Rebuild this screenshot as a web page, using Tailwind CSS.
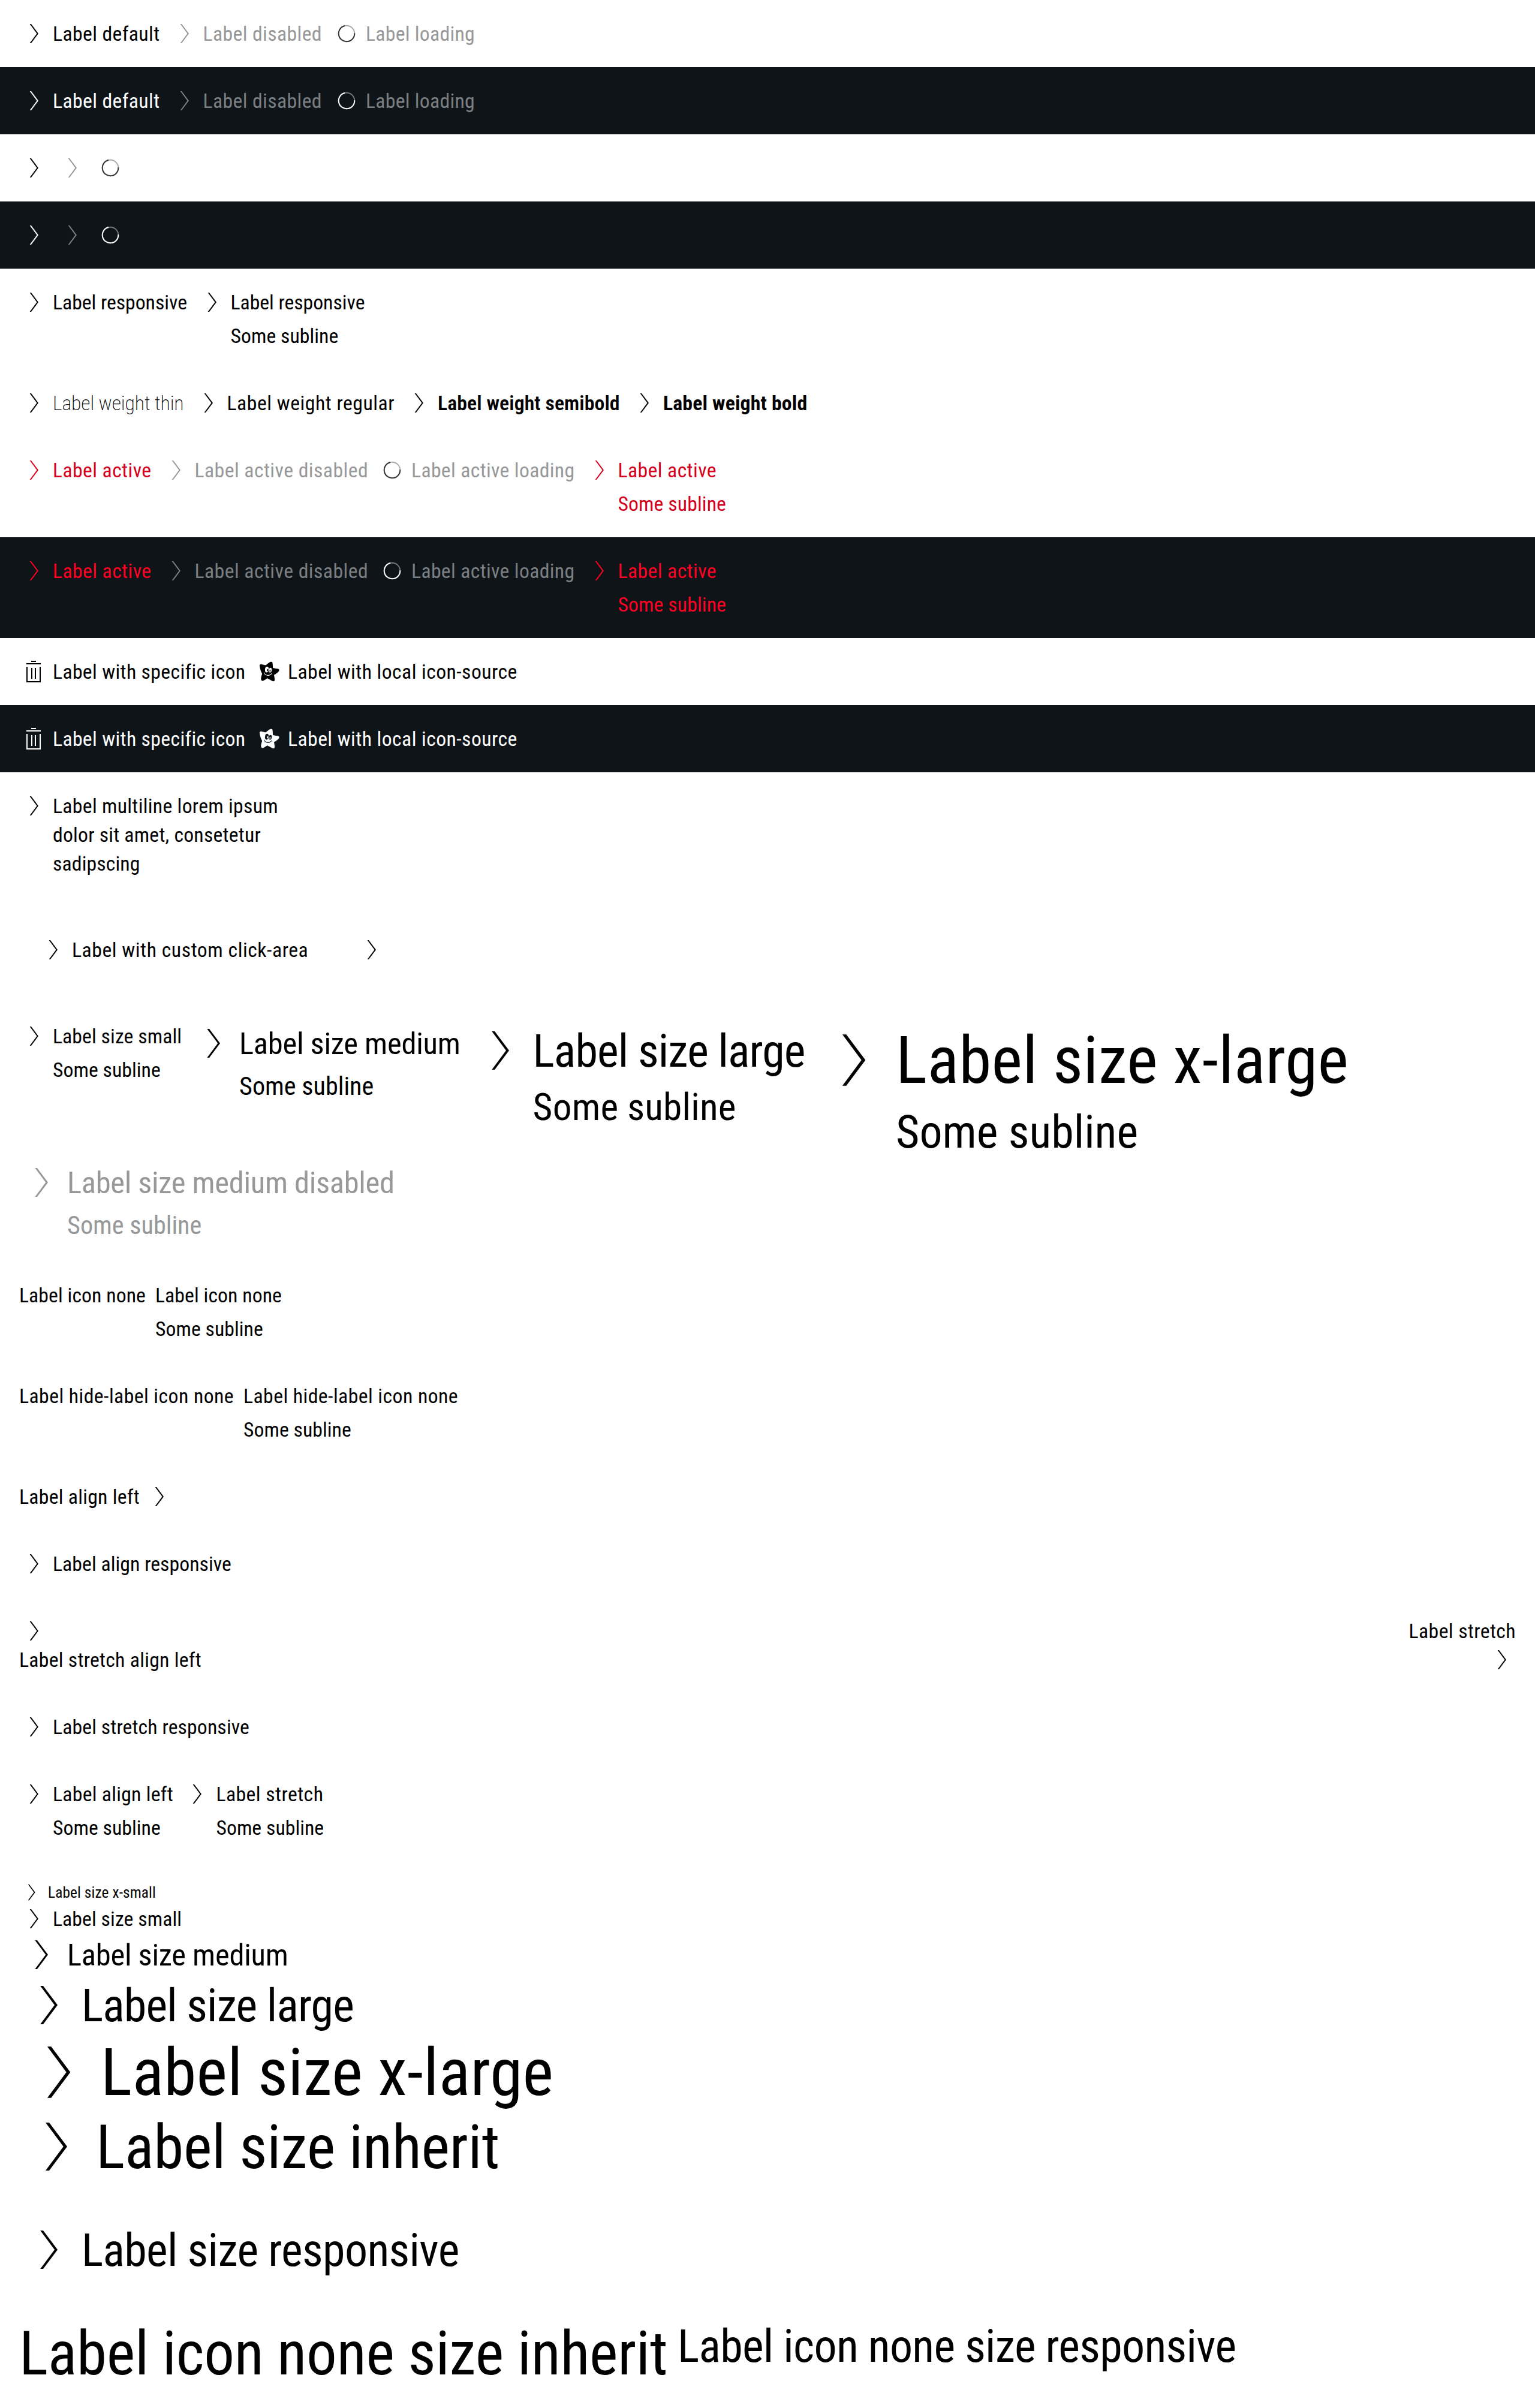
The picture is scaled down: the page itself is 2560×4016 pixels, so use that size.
<!DOCTYPE html>
<html lang="en">
<head>
<meta charset="utf-8">
<title>Link pure overview</title>
<script src="https://cdn.jsdelivr.net/npm/@tailwindcss/browser@4"></script>
</head>
<body class="bg-white text-black font-['Roboto',sans-serif] font-stretch-condensed text-[33.75px] leading-[48px] whitespace-nowrap">

<!-- Icon definitions -->
<svg class="hidden">
  <symbol id="arrow" viewBox="0 0 48 48"><path fill="currentColor" d="M17.6 8H20L32 24 20 40H17.6L29.5 24Z"/></symbol>
  <symbol id="spinner" viewBox="0 0 48 48">
    <circle cx="24" cy="24" r="13.3" fill="none" stroke="currentColor" stroke-opacity=".42" stroke-width="1.9"/>
    <path d="M37.3 23.2A13.3 13.3 0 1 1 21 11" fill="none" stroke="currentColor" stroke-width="1.9"/>
  </symbol>
  <symbol id="trash" viewBox="0 0 48 48"><path fill="currentColor" d="M20 6h8v2h-8zM12 10h24v2H12zM12 16h2v24h20V16h2v26H12zM20 18h2v18h-2zM26 18h2v18h-2z"/></symbol>
  <symbol id="star" viewBox="0 0 48 48">
    <path fill="currentColor" fill-rule="evenodd" d="M9.1 14.6C8.8 12 10.4 11.4 12.4 12L19.2 13.4C22 11.4 24.4 8.8 27.4 7.8C29.6 7.2 30.6 8.2 30.6 10L31.2 18C34.6 19 38.6 18.8 40.6 19.8C42.4 21 41.8 22.8 40.2 24.4C38 26.6 35.2 28.4 33 29.6C33.6 32.8 34.2 36 34 38.4C33.6 40.6 31.6 40.6 29.6 39.4C27 38 24.2 36.4 21.8 35.2C19.4 36.4 17.2 38.4 14.8 39.4C12.4 40 11.4 38.6 11.3 36.6C11.2 33.4 12.4 30.6 13.2 27.8C11.2 24 9.4 19.2 9.1 14.6Z
      M18 20.2a3 4.8 8 1 0 6 .8a3 4.8 8 1 0-6-.8Z M21.2 21.4a1.1 1.9 8 1 1 2.2.3a1.1 1.9 8 1 1-2.2-.3Z
      M24.4 21.4a2.4 3.9 8 1 0 4.8.7a2.4 3.9 8 1 0-4.8-.7Z M25.5 22.6a.9 1.6 8 1 1 1.8.2a.9 1.6 8 1 1-1.8-.2Z
      M15.8 25.6C17.4 32.2 26.4 32.8 29.6 27.2L28.8 26.8C26 31 18.4 30.8 16.7 25.4Z"/>
  </symbol>
</svg>

<!-- Default, disabled, loading -->
<section class="flex h-[112px] items-start gap-4 px-8 pt-[33px]">
  <a class="flex gap-2"><svg class="-mt-px size-12"><use href="#arrow"/></svg><span class="w-[178.5px] tracking-[.0111em]">Label default</span></a>
  <a class="flex gap-2 text-[#96989a]"><svg class="-mt-px size-12"><use href="#arrow"/></svg><span class="w-[199.5px] tracking-[.0112em]">Label disabled</span></a>
  <a class="flex gap-2 text-[#96989a]"><svg class="-mt-px size-12 text-[#323639]"><use href="#spinner"/></svg><span class="tracking-[.0079em]">Label loading</span></a>
</section>
<section class="flex h-[112px] items-start gap-4 bg-[#0e1418] px-8 pt-[33px] text-white">
  <a class="flex gap-2"><svg class="-mt-px size-12"><use href="#arrow"/></svg><span class="w-[178.5px] tracking-[.0111em]">Label default</span></a>
  <a class="flex gap-2 text-[#7c7f81]"><svg class="-mt-px size-12"><use href="#arrow"/></svg><span class="w-[199.5px] tracking-[.0112em]">Label disabled</span></a>
  <a class="flex gap-2 text-[#7c7f81]"><svg class="-mt-px size-12 text-white"><use href="#spinner"/></svg><span class="tracking-[.0079em]">Label loading</span></a>
</section>

<!-- Hidden labels -->
<section class="flex h-[112px] items-start gap-4 p-8">
  <svg class="size-12"><use href="#arrow"/></svg>
  <svg class="size-12 text-[#96989a]"><use href="#arrow"/></svg>
  <svg class="size-12 text-[#323639]"><use href="#spinner"/></svg>
</section>
<section class="flex h-[112px] items-start gap-4 bg-[#0e1418] p-8 text-white">
  <svg class="size-12"><use href="#arrow"/></svg>
  <svg class="size-12 text-[#7c7f81]"><use href="#arrow"/></svg>
  <svg class="size-12"><use href="#spinner"/></svg>
</section>

<!-- Responsive label -->
<section class="flex h-[168px] items-start gap-4 px-8 pt-[33px]">
  <a class="flex gap-2"><svg class="-mt-px size-12"><use href="#arrow"/></svg><span class="w-[224.5px] tracking-[-.001em]">Label responsive</span></a>
  <a class="flex gap-2"><svg class="-mt-px size-12"><use href="#arrow"/></svg><span class="flex flex-col gap-2"><span class="tracking-[-.001em]">Label responsive</span><span class="tracking-[.001em]">Some subline</span></span></a>
</section>

<!-- Weights -->
<section class="flex h-[112px] items-start gap-4 px-8 pt-[33px]">
  <a class="flex gap-2"><svg class="-mt-px size-12"><use href="#arrow"/></svg><span class="w-[218.5px] font-extralight tracking-[-.0038em]">Label weight thin</span></a>
  <a class="flex gap-2"><svg class="-mt-px size-12"><use href="#arrow"/></svg><span class="w-[279.5px] tracking-[.0152em]">Label weight regular</span></a>
  <a class="flex gap-2"><svg class="-mt-px size-12"><use href="#arrow"/></svg><span class="w-[304px] font-semibold tracking-[.0025em]">Label weight semibold</span></a>
  <a class="flex gap-2"><svg class="-mt-px size-12"><use href="#arrow"/></svg><span class="font-bold tracking-[.0045em]">Label weight bold</span></a>
</section>

<!-- Active -->
<section class="flex h-[168px] items-start gap-4 px-8 pt-[33px] text-[#d5001c]">
  <a class="flex gap-2"><svg class="-mt-px size-12"><use href="#arrow"/></svg><span class="w-[164.5px] tracking-[.0118em]">Label active</span></a>
  <a class="flex gap-2 text-[#96989a]"><svg class="-mt-px size-12"><use href="#arrow"/></svg><span class="w-[289.5px] tracking-[.013em]">Label active disabled</span></a>
  <a class="flex gap-2 text-[#96989a]"><svg class="-mt-px size-12 text-[#323639]"><use href="#spinner"/></svg><span class="w-[272.5px] tracking-[.01em]">Label active loading</span></a>
  <a class="flex gap-2"><svg class="-mt-px size-12"><use href="#arrow"/></svg><span class="flex flex-col gap-2"><span class="tracking-[.0118em]">Label active</span><span class="tracking-[.0026em]">Some subline</span></span></a>
</section>
<section class="flex h-[168px] items-start gap-4 bg-[#0e1418] px-8 pt-[33px] text-[#ff0223]">
  <a class="flex gap-2"><svg class="-mt-px size-12"><use href="#arrow"/></svg><span class="w-[164.5px] tracking-[.0118em]">Label active</span></a>
  <a class="flex gap-2 text-[#7c7f81]"><svg class="-mt-px size-12"><use href="#arrow"/></svg><span class="w-[289.5px] tracking-[.013em]">Label active disabled</span></a>
  <a class="flex gap-2 text-[#7c7f81]"><svg class="-mt-px size-12 text-white"><use href="#spinner"/></svg><span class="w-[272.5px] tracking-[.01em]">Label active loading</span></a>
  <a class="flex gap-2"><svg class="-mt-px size-12"><use href="#arrow"/></svg><span class="flex flex-col gap-2"><span class="tracking-[.0118em]">Label active</span><span class="tracking-[.0026em]">Some subline</span></span></a>
</section>

<!-- Specific icons -->
<section class="flex h-[112px] items-start gap-4 px-8 pt-[33px]">
  <a class="flex gap-2"><svg class="-mt-px size-12"><use href="#trash"/></svg><span class="w-[320px] tracking-[.01em]">Label with specific icon</span></a>
  <a class="flex gap-2"><svg class="-mt-px size-12"><use href="#star"/></svg><span class="tracking-[.0125em]">Label with local icon-source</span></a>
</section>
<section class="flex h-[112px] items-start gap-4 bg-[#0e1418] px-8 pt-[33px] text-white">
  <a class="flex gap-2"><svg class="-mt-px size-12"><use href="#trash"/></svg><span class="w-[320px] tracking-[.01em]">Label with specific icon</span></a>
  <a class="flex gap-2"><svg class="-mt-px size-12"><use href="#star"/></svg><span class="tracking-[.0125em]">Label with local icon-source</span></a>
</section>

<!-- Multiline -->
<section class="flex h-[208px] items-start px-8 pt-[33px]">
  <a class="flex gap-2"><svg class="-mt-px size-12"><use href="#arrow"/></svg><span class="flex flex-col"><span class="tracking-[.0089em]">Label multiline lorem ipsum</span><span class="tracking-[.0062em]">dolor sit amet, consetetur</span><span class="tracking-[.0032em]">sadipscing</span></span></a>
</section>

<!-- Custom click area -->
<section class="flex h-[176px] items-start gap-4 px-8 pt-[33px]">
  <a class="flex gap-2 p-8"><svg class="-mt-px size-12"><use href="#arrow"/></svg><span class="w-[394.5px] tracking-[.0158em]">Label with custom click-area</span></a>
  <a class="flex p-8"><svg class="-mt-px size-12"><use href="#arrow"/></svg></a>
</section>

<!-- Sizes with subline -->
<section class="flex h-[432px] flex-col items-start px-8 pt-[33px]">
  <div class="flex h-[232px] items-start gap-4">
    <a class="flex gap-2"><svg class="-mt-px size-12"><use href="#arrow"/></svg><span class="flex w-[215px] flex-col gap-2"><span class="tracking-[.0021em]">Label size small</span><span class="tracking-[.001em]">Some subline</span></span></a>
    <a class="flex gap-2"><svg class="-mt-px size-[72px]"><use href="#arrow"/></svg><span class="flex w-[369.6px] flex-col gap-2"><span class="text-[50.6px] leading-[72px] tracking-[-.0052em]">Label size medium</span><span class="-mt-px text-[42.2px] leading-[56px]">Some subline</span></span></a>
    <a class="flex gap-2"><svg class="-mt-px size-[96px]"><use href="#arrow"/></svg><span class="flex w-[453.4px] flex-col gap-2"><span class="text-[76px] leading-[96px] tracking-[-.0115em]">Label size large</span><span class="-mt-[3px] text-[63.3px] leading-[80px] tracking-[.0035em]">Some subline</span></span></a>
    <a class="flex gap-2"><svg class="-mt-px size-[128px]"><use href="#arrow"/></svg><span class="flex flex-col gap-2"><span class="text-[109.7px] leading-[128px] tracking-[.0023em]">Label size x-large</span><span class="-mt-px text-[76px] leading-[96px]">Some subline</span></span></a>
  </div>
  <a class="flex gap-2 text-[#96989a]"><svg class="-mt-px size-[72px]"><use href="#arrow"/></svg><span class="flex flex-col gap-2"><span class="text-[50.6px] leading-[72px] tracking-[-.0063em]">Label size medium disabled</span><span class="-mt-px text-[42.2px] leading-[56px]">Some subline</span></span></a>
</section>

<!-- Without icon -->
<section class="flex h-[168px] items-start gap-4 px-8 pt-[33px]">
  <a class="w-[211px] tracking-[.002em]">Label icon none</a>
  <a class="flex flex-col gap-2"><span class="tracking-[.002em]">Label icon none</span><span class="tracking-[.001em]">Some subline</span></a>
</section>
<section class="flex h-[168px] items-start gap-4 px-8 pt-[33px]">
  <a class="w-[358px] tracking-[.0128em]">Label hide-label icon none</a>
  <a class="flex flex-col gap-2"><span class="tracking-[.0128em]">Label hide-label icon none</span><span class="tracking-[.001em]">Some subline</span></a>
</section>

<!-- Alignment -->
<section class="flex h-[112px] items-start px-8 pt-[33px]">
  <a class="flex gap-2"><span class="w-[200.5px] tracking-[.0078em]">Label align left</span><svg class="-mt-px size-12"><use href="#arrow"/></svg></a>
</section>
<section class="flex h-[112px] items-start px-8 pt-[33px]">
  <a class="flex gap-2"><svg class="-mt-px size-12"><use href="#arrow"/></svg><span class="tracking-[.0015em]">Label align responsive</span></a>
</section>

<!-- Stretch -->
<section class="flex h-[160px] flex-col px-8 pt-[33px]">
  <a class="flex justify-between"><svg class="-mt-px size-12"><use href="#arrow"/></svg><span class="tracking-[.0118em]">Label stretch</span></a>
  <a class="flex justify-between"><span class="tracking-[.0079em]">Label stretch align left</span><svg class="-mt-px size-12"><use href="#arrow"/></svg></a>
</section>
<section class="flex h-[112px] items-start px-8 pt-[33px]">
  <a class="flex gap-2"><svg class="-mt-px size-12"><use href="#arrow"/></svg><span class="tracking-[.0034em]">Label stretch responsive</span></a>
</section>
<section class="flex h-[168px] items-start gap-4 px-8 pt-[33px]">
  <a class="flex gap-2"><svg class="-mt-px size-12"><use href="#arrow"/></svg><span class="flex w-[200.4px] flex-col gap-2"><span class="tracking-[.0078em]">Label align left</span><span class="tracking-[.001em]">Some subline</span></span></a>
  <a class="flex gap-2"><svg class="-mt-px size-12"><use href="#arrow"/></svg><span class="flex flex-col gap-2"><span class="tracking-[.0132em]">Label stretch</span><span class="tracking-[.001em]">Some subline</span></span></a>
</section>

<!-- All sizes -->
<section class="flex h-[568px] flex-col items-start px-8 pt-[33px]">
  <a class="flex gap-2 text-[25.3px] leading-[40px]"><svg class="-mt-px size-10"><use href="#arrow"/></svg><span class="tracking-[.005em]">Label size x-small</span></a>
  <a class="flex gap-2"><svg class="-mt-px size-12"><use href="#arrow"/></svg><span class="tracking-[.0021em]">Label size small</span></a>
  <a class="flex gap-2 text-[50.6px] leading-[72px]"><svg class="-mt-px size-[72px]"><use href="#arrow"/></svg><span class="tracking-[-.0052em]">Label size medium</span></a>
  <a class="flex gap-2 text-[76px] leading-[96px]"><svg class="-mt-px size-[96px]"><use href="#arrow"/></svg><span class="tracking-[-.0115em]">Label size large</span></a>
  <a class="flex gap-2 text-[109.7px] leading-[128px]"><svg class="-mt-px size-[128px]"><use href="#arrow"/></svg><span class="tracking-[.0023em]">Label size x-large</span></a>
  <a class="flex h-[120px] gap-2 text-[101.3px] leading-[121px]"><svg class="-mt-px size-[120px]"><use href="#arrow"/></svg><span class="tracking-[-.0022em]">Label size inherit</span></a>
</section>
<section class="flex h-[160px] items-start px-8 pt-[33px]">
  <a class="flex gap-2 text-[76px] leading-[96px]"><svg class="-mt-px size-[96px]"><use href="#arrow"/></svg><span class="tracking-[-.0086em]">Label size responsive</span></a>
</section>
<section class="flex h-[184px] items-start gap-4 px-8 pt-[33px]">
  <a class="h-[120px] w-[1082px] text-[101.3px] leading-[121px] tracking-[-.0031em]">Label icon none size inherit</a>
  <a class="text-[76px] leading-[96px] tracking-[-.0092em]">Label icon none size responsive</a>
</section>

</body>
</html>
